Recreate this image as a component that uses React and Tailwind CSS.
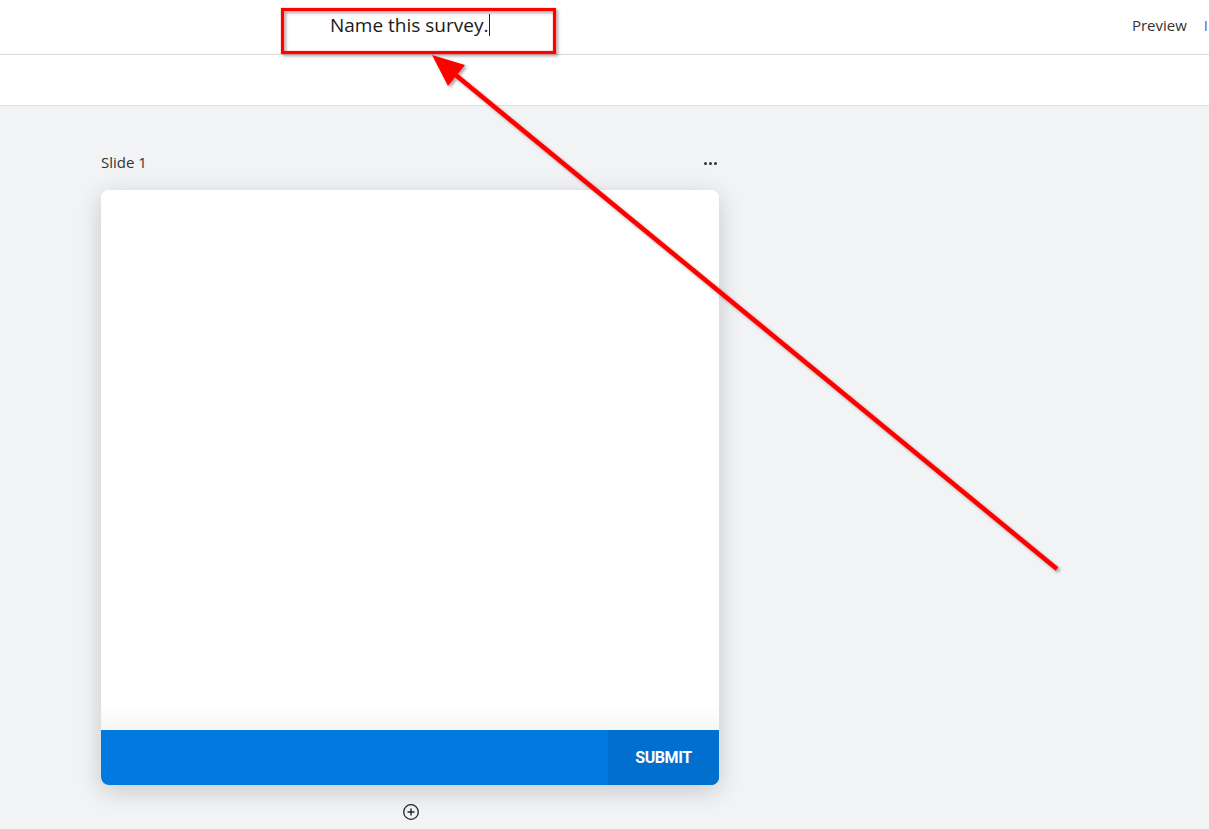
import React from 'react';

const font = { fontFamily: '"Open Sans", "Liberation Sans", sans-serif' };

// red callout drawn over the editor: a box round the title and an arrow pointing at it
const Callout = () => (
  <svg className="absolute inset-0 pointer-events-none" width="1209" height="829" viewBox="0 0 1209 829">
    <defs>
      <filter id="drop" x="-20%" y="-20%" width="140%" height="140%">
        <feDropShadow dx="2" dy="2" stdDeviation="1.5" floodColor="#000" floodOpacity="0.35" />
      </filter>
    </defs>
    <g filter="url(#drop)">
      <rect x="282.5" y="9.5" width="272" height="43" fill="none" stroke="#f00" strokeWidth="3.2" />
      <line x1="1057" y1="569" x2="452" y2="72" stroke="#f00" strokeWidth="4.6" />
      <polygon points="432,55 465,65 448,86" fill="#f00" />
    </g>
  </svg>
);

export default function App() {
  return (
    <div className="relative w-[1209px] h-[829px] overflow-hidden bg-[#f2f3f5]" style={font}>
      {/* title bar */}
      <div className="h-[55px] bg-white border-b border-[#dcdcdc] flex items-center">
        <div className="w-[330px]" />
        <div className="flex items-center text-[19px] text-[#1a1a1a] leading-none pb-[4px]">
          Name this survey.
          <span className="inline-block w-px h-[22px] bg-[#222] ml-px" />
        </div>
        <div className="flex-1" />
        <span className="text-[15px] text-[#333] pb-[4px] whitespace-nowrap">Preview</span>
        <span className="ml-[17px] mr-[1px] shrink-0 text-[15px] text-[#6b4bd8] pb-[4px]">I</span>
      </div>

      {/* toolbar strip */}
      <div className="h-[51px] bg-white border-b border-[#e1e1e1]" />

      {/* canvas */}
      <div className="pl-[101px] pt-[46px]">
        <div className="w-[618px] flex items-center justify-between h-[20px]">
          <span className="text-[15px] text-[#333]">Slide 1</span>
          <span className="flex gap-[2px] mr-[2px] mt-[2px]">
            <span className="w-[3px] h-[3px] bg-[#333] rounded-full" />
            <span className="w-[3px] h-[3px] bg-[#333] rounded-full" />
            <span className="w-[3px] h-[3px] bg-[#333] rounded-full" />
          </span>
        </div>

        <div className="mt-[18px] w-[618px] h-[595px] bg-white rounded-[8px] overflow-hidden flex flex-col shadow-[0_6px_24px_rgba(0,0,0,0.18)]">
          <div className="flex-1 bg-gradient-to-b from-white from-[95%] to-[#f7f7f7]" />
          <div className="h-[55px] bg-[#017ae0] flex justify-end">
            <button className="w-[111px] bg-[#016fcd] text-white text-[16px] font-bold tracking-tight" style={{ fontFamily: 'Roboto, "Liberation Sans", sans-serif' }}>
              SUBMIT
            </button>
          </div>
        </div>

        <div className="w-[618px] flex justify-center mt-[18px]">
          <svg width="18" height="18" viewBox="0 0 18 18" className="ml-[1px]">
            <circle cx="9" cy="9" r="7.3" fill="none" stroke="#222" strokeWidth="1.3" />
            <path d="M9 5.5v7M5.5 9h7" stroke="#222" strokeWidth="1.4" />
          </svg>
        </div>
      </div>

      <Callout />
    </div>
  );
}
